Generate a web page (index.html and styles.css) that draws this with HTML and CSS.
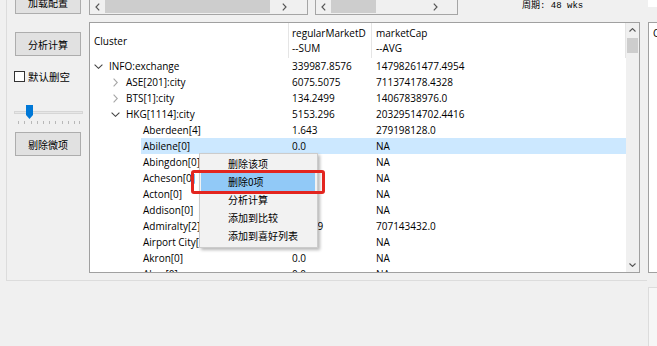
FILE: index.html
```html
<!DOCTYPE html>
<html lang="zh">
<head>
    <meta charset="UTF-8">
    <title>Cluster</title>
    <link rel="stylesheet" href="styles.css">
</head>
<body>

<div class="screen">
    <div class="group">
        <div class="topbar">
            <button class="btn btn-load">加载配置</button>
            <div class="hscroll hs-a">
                <span class="arr"><svg width="5" height="8" viewBox="0 0 5 8"><path d="M4.2 0.6 L1 4 L4.2 7.4" fill="none" stroke="#555" stroke-width="1.2"/></svg></span>
                <span class="hthumb"></span>
                <span class="hgap"></span>
                <span class="arr"><svg width="5" height="8" viewBox="0 0 5 8"><path d="M0.8 0.6 L4 4 L0.8 7.4" fill="none" stroke="#555" stroke-width="1.2"/></svg></span>
                <span class="hpad"></span>
            </div>
            <div class="hscroll hs-b">
                <span class="arr"><svg width="5" height="8" viewBox="0 0 5 8"><path d="M4.2 0.6 L1 4 L4.2 7.4" fill="none" stroke="#555" stroke-width="1.2"/></svg></span>
                <span class="hthumb"></span>
                <span class="hgap"></span>
                <span class="arr"><svg width="5" height="8" viewBox="0 0 5 8"><path d="M0.8 0.6 L4 4 L0.8 7.4" fill="none" stroke="#555" stroke-width="1.2"/></svg></span>
                <span class="hpad"></span>
            </div>
            <div class="period">周期: 48 wks</div>
        </div>

        <div class="work">
            <div class="side">
                <button class="btn">分析计算</button>
                <label class="check"><span class="box"></span>默认删空</label>
                <svg class="slider" width="70" height="20" viewBox="0 0 70 20">
                    <rect x="1.5" y="7.5" width="68" height="2" fill="#e7e7e7" stroke="#d6d6d6"/>
                    <g stroke="#b8b8b8">
                        <line x1="5.5" y1="17" x2="5.5" y2="20"/>
                        <line x1="11.5" y1="17" x2="11.5" y2="20"/>
                        <line x1="18.5" y1="17" x2="18.5" y2="20"/>
                        <line x1="24.5" y1="17" x2="24.5" y2="20"/>
                        <line x1="30.5" y1="17" x2="30.5" y2="20"/>
                        <line x1="36.5" y1="17" x2="36.5" y2="20"/>
                        <line x1="42.5" y1="17" x2="42.5" y2="20"/>
                        <line x1="49.5" y1="17" x2="49.5" y2="20"/>
                        <line x1="55.5" y1="17" x2="55.5" y2="20"/>
                        <line x1="61.5" y1="17" x2="61.5" y2="20"/>
                        <line x1="66.5" y1="17" x2="66.5" y2="20"/>
                    </g>
                    <path d="M13 1 H20 V11 L16.5 15 L13 11 Z" fill="#0078d7"/>
                </svg>
                <button class="btn btn-trim">剔除微项</button>
            </div>

            <div class="tree">
                <div class="tv">
                    <div class="thead">
                        <div class="hcell h1">Cluster</div>
                        <div class="hcell h2">regularMarketD<br>--SUM</div>
                        <div class="hcell h3">marketCap<br>--AVG</div>
                    </div>

                    <div class="row">
                        <div class="c1 lv0"><span class="twist"><svg width="9" height="5" viewBox="0 0 9 5"><path d="M0.6 0.6 L4.5 4.3 L8.4 0.6" fill="none" stroke="#444" stroke-width="1.1"/></svg></span>INFO:exchange</div>
                        <div class="c2">339987.8576</div>
                        <div class="c3">14798261477.4954</div>
                    </div>
                    <div class="row">
                        <div class="c1 lv1"><span class="twist"><svg width="5" height="9" viewBox="0 0 5 9"><path d="M0.6 0.6 L4.3 4.5 L0.6 8.4" fill="none" stroke="#a6a6a6" stroke-width="1.1"/></svg></span>ASE[201]:city</div>
                        <div class="c2">6075.5075</div>
                        <div class="c3">711374178.4328</div>
                    </div>
                    <div class="row">
                        <div class="c1 lv1"><span class="twist"><svg width="5" height="9" viewBox="0 0 5 9"><path d="M0.6 0.6 L4.3 4.5 L0.6 8.4" fill="none" stroke="#a6a6a6" stroke-width="1.1"/></svg></span>BTS[1]:city</div>
                        <div class="c2">134.2499</div>
                        <div class="c3">14067838976.0</div>
                    </div>
                    <div class="row">
                        <div class="c1 lv1"><span class="twist"><svg width="9" height="5" viewBox="0 0 9 5"><path d="M0.6 0.6 L4.5 4.3 L8.4 0.6" fill="none" stroke="#444" stroke-width="1.1"/></svg></span>HKG[1114]:city</div>
                        <div class="c2">5153.296</div>
                        <div class="c3">20329514702.4416</div>
                    </div>
                    <div class="row">
                        <div class="c1 lv2">Aberdeen[4]</div>
                        <div class="c2">1.643</div>
                        <div class="c3">279198128.0</div>
                    </div>
                    <div class="row sel">
                        <div class="c1 lv2">Abilene[0]</div>
                        <div class="c2">0.0</div>
                        <div class="c3">NA</div>
                    </div>
                    <div class="row">
                        <div class="c1 lv2">Abingdon[0]</div>
                        <div class="c2">0.0</div>
                        <div class="c3">NA</div>
                    </div>
                    <div class="row">
                        <div class="c1 lv2">Acheson[0]</div>
                        <div class="c2">0.0</div>
                        <div class="c3">NA</div>
                    </div>
                    <div class="row">
                        <div class="c1 lv2">Acton[0]</div>
                        <div class="c2">0.0</div>
                        <div class="c3">NA</div>
                    </div>
                    <div class="row">
                        <div class="c1 lv2">Addison[0]</div>
                        <div class="c2">0.0</div>
                        <div class="c3">NA</div>
                    </div>
                    <div class="row">
                        <div class="c1 lv2">Admiralty[2]</div>
                        <div class="c2">12.369</div>
                        <div class="c3">707143432.0</div>
                    </div>
                    <div class="row">
                        <div class="c1 lv2">Airport City[0]</div>
                        <div class="c2">0.0</div>
                        <div class="c3">NA</div>
                    </div>
                    <div class="row">
                        <div class="c1 lv2">Akron[0]</div>
                        <div class="c2">0.0</div>
                        <div class="c3">NA</div>
                    </div>
                    <div class="row">
                        <div class="c1 lv2">Aksu[0]</div>
                        <div class="c2">0.0</div>
                        <div class="c3">NA</div>
                    </div>
                </div>

                <div class="vscroll">
                    <span class="varr"><svg width="7" height="4" viewBox="0 0 7 4"><path d="M0.5 3.5 L3.5 0.6 L6.5 3.5" fill="none" stroke="#555" stroke-width="1.1"/></svg></span>
                    <span class="vthumb"></span>
                    <span class="vgap"></span>
                    <span class="varr"><svg width="7" height="4" viewBox="0 0 7 4"><path d="M0.5 0.5 L3.5 3.4 L6.5 0.5" fill="none" stroke="#555" stroke-width="1.1"/></svg></span>
                </div>

                <!-- context menu over the list -->
                <div class="menu">
                    <div class="menu-item">删除该项</div>
                    <div class="menu-item active">删除0项</div>
                    <div class="menu-item">分析计算</div>
                    <div class="menu-item">添加到比较</div>
                    <div class="menu-item">添加到喜好列表</div>
                </div>
                <div class="mark"></div>
            </div>
        </div>
    </div>

    <div class="aside">
        <div class="aside-top"></div>
        <div class="aside-panel">C</div>
        <div class="aside-box"></div>
    </div>
</div>

</body>
</html>
```

FILE: styles.css
```css
* {
    box-sizing: border-box;
}

body {
    margin: 0;
    background: #f0f0f0;
    font-family: "Open Sans", "Noto Sans CJK SC", sans-serif;
    font-size: 10px;
    color: #000;
    overflow: hidden;
}

.screen {
    display: flex;
    width: 657px;
    height: 346px;
    overflow: hidden;
}

.group {
    flex: none;
    width: 641px;
    height: 281px;
    margin-left: 6px;
    padding-left: 8px;
    border-left: 1px solid #dcdcdc;
    border-bottom: 1px solid #dcdcdc;
}

/* top strip */
.topbar {
    display: flex;
    align-items: flex-start;
    height: 14px;
}

.btn {
    flex: none;
    width: 66px;
    height: 24px;
    padding: 0;
    border: 1px solid #adadad;
    background: #e1e1e1;
    font-family: "Noto Sans CJK SC", sans-serif;
    font-size: 10px;
    color: #000;
}

.btn-load {
    margin-top: -10px;
}

.hscroll {
    flex: none;
    display: flex;
    height: 16px;
    margin-top: -1px;
    border: 1px solid #a5a5a5;
    background: #f0f0f0;
}

.hs-a {
    width: 219px;
    margin-left: 8px;
}

.hs-b {
    width: 143px;
    margin-left: 7px;
}

.hs-a .hthumb {
    width: 165px;
}

.hs-b .hthumb {
    width: 45px;
}

.hs-a .hpad {
    width: 15px;
}

.hs-b .hpad {
    width: 14px;
}

.arr {
    flex: none;
    width: 15px;
    display: flex;
    justify-content: center;
    align-items: center;
}

.hthumb {
    flex: none;
    margin-bottom: 1px;
    background: #cdcdcd;
}

.hgap {
    flex: 1;
}

.period {
    margin-left: 64px;
    line-height: 12px;
    font-family: "Liberation Mono", "Noto Sans CJK SC", monospace;
    font-size: 9px;
}

/* main area */
.work {
    display: flex;
    margin-top: 8px;
}

.side {
    flex: none;
    width: 66px;
    display: flex;
    flex-direction: column;
    padding-top: 10px;
}

.check {
    display: flex;
    align-items: center;
    gap: 3px;
    height: 11px;
    margin: 15px 0 0 -1px;
    font-family: "Noto Sans CJK SC", sans-serif;
    font-size: 10.5px;
}

.check .box {
    width: 11px;
    height: 11px;
    border: 1px solid #333;
    background: #fff;
}

.slider {
    display: block;
    margin: 22px 0 0 -2px;
}

.btn-trim {
    margin-top: 8px;
}

.tree {
    position: relative;
    flex: none;
    display: flex;
    width: 551px;
    height: 251px;
    margin-left: 8px;
    border: 1px solid #a0a0a0;
    background: #fff;
}

.tv {
    flex: 1;
    overflow: hidden;
}

.thead,
.row {
    display: grid;
    grid-template-columns: 199px 83px 1fr;
    white-space: nowrap;
}

.thead {
    height: 35px;
}

.hcell {
    overflow: hidden;
    border-right: 1px solid #e5e5e5;
}

.h1 {
    display: flex;
    align-items: center;
    padding-left: 4px;
}

.h2,
.h3 {
    padding-top: 3px;
    line-height: 15px;
}

.h2 {
    padding-left: 3px;
}

.h3 {
    padding-left: 4px;
}

.row {
    height: 16px;
    line-height: 16px;
}

.row.sel {
    background: linear-gradient(90deg, transparent 51px, #cce8ff 51px);
}

.c1,
.c2,
.c3 {
    overflow: hidden;
}

.c1 {
    display: flex;
}

.c1.lv0 {
    padding-left: 0;
}

.c1.lv1 {
    padding-left: 17px;
}

.c1.lv2 {
    padding-left: 53px;
}

.twist {
    flex: none;
    width: 17px;
    margin-right: 2px;
    display: flex;
    justify-content: center;
    align-items: center;
}

.c2 {
    padding-left: 3px;
}

.c3 {
    padding-left: 4px;
}

.vscroll {
    flex: none;
    width: 13px;
    display: flex;
    flex-direction: column;
    background: #f0f0f0;
}

.varr {
    flex: none;
    height: 14px;
    display: flex;
    justify-content: center;
    align-items: center;
}

.vthumb {
    flex: none;
    height: 15px;
    margin: 1px 1px 0;
    background: #cdcdcd;
}

.vgap {
    flex: 1;
}

/* popup */
.menu {
    position: absolute;
    left: 109px;
    top: 130px;
    width: 119px;
    height: 95px;
    padding: 1px 2px 0 1px;
    background: #f2f2f2;
    border: 1px solid #cccccc;
    box-shadow: 2px 2px 3px rgba(0, 0, 0, 0.28);
    font-family: "Noto Sans CJK SC", sans-serif;
    font-size: 10px;
}

.menu-item {
    height: 18px;
    line-height: 18px;
    padding-left: 27px;
}

.menu-item.active {
    background: #91c9f7;
}

.mark {
    position: absolute;
    left: 101px;
    top: 147px;
    width: 134px;
    height: 24px;
    border: 3px solid #e3251f;
    border-radius: 3px;
}

/* right edge */
.aside {
    flex: 1;
    display: flex;
    flex-direction: column;
    margin-left: 1px;
}

.aside-top {
    height: 7px;
    background: #fff;
}

.aside-panel {
    height: 251px;
    margin-top: 15px;
    padding: 3px 0 0 4px;
    border: 1px solid #a0a0a0;
    border-right: none;
    background: #fff;
    line-height: 14px;
}

.aside-box {
    flex: 1;
    margin-top: 14px;
    border-left: 1px solid #dcdcdc;
    border-top: 1px solid #dcdcdc;
    background: #f6f6f6;
}
```
